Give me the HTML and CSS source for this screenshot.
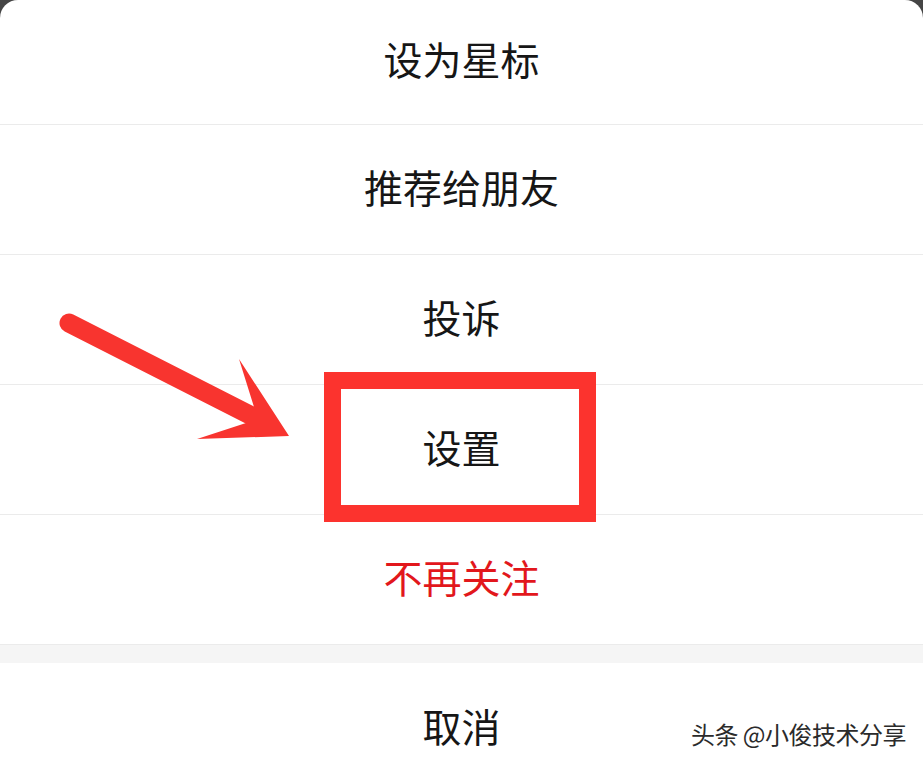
FILE: index.html
```html
<!DOCTYPE html>
<html lang="zh-CN">

<head>
    <meta charset="UTF-8">
    <meta name="viewport" content="width=device-width, initial-scale=1.0">
    <title>操作菜单</title>
    <link rel="stylesheet" href="styles.css">
</head>

<body>
    <div class="sheet">
        <!-- menu options -->
        <ul class="menu">
            <li class="menu-item menu-item-first">设为星标</li>
            <li class="menu-item">推荐给朋友</li>
            <li class="menu-item">投诉</li>
            <li class="menu-item">设置</li>
            <li class="menu-item menu-item-danger">不再关注</li>
        </ul>

        <div class="menu-gap"></div>

        <div class="menu-item menu-cancel">取消</div>

        <!-- annotation drawn on top of the screenshot -->
        <div class="mark-box"></div>
        <svg class="mark-arrow" width="923" height="771" viewBox="0 0 923 771">
            <line x1="69" y1="323" x2="252" y2="416" stroke="#f8342f" stroke-width="19" stroke-linecap="round" />
            <polygon points="239,359 289,436 197,439 246,423 254,407" fill="#f8342f" />
        </svg>

        <div class="watermark">头条 @小俊技术分享</div>
    </div>
</body>

</html>
```

FILE: styles.css
```css
html,
body {
    margin: 0;
    padding: 0;
    height: 771px;
    overflow: hidden;
}

body {
    background-color: #454545;
    font-family: 'Noto Sans CJK SC', 'Noto Sans', sans-serif;
}

.sheet {
    position: relative;
    background-color: #ffffff;
    border-radius: 18px 18px 0 0;
    height: 771px;
    overflow: hidden;
}

.menu {
    list-style: none;
    margin: 0;
    padding: 0;
}

.menu-item {
    display: flex;
    align-items: center;
    justify-content: center;
    height: 130px;
    padding-bottom: 6px;
    box-sizing: border-box;
    border-bottom: 1px solid #ebebeb;
    font-size: 39px;
    line-height: 1;
    color: #161616;
}

.menu-item-first {
    height: 125px;
    padding-bottom: 8px;
}

.menu-item-danger {
    color: #e2171c;
}

.menu-gap {
    height: 18px;
    background-color: #f5f5f5;
}

.menu-cancel {
    border-bottom: none;
}

.mark-box {
    position: absolute;
    left: 324px;
    top: 372px;
    width: 272px;
    height: 150px;
    box-sizing: border-box;
    border: 17px solid #fc332e;
}

.mark-arrow {
    position: absolute;
    left: 0;
    top: 0;
}

.watermark {
    position: absolute;
    right: 17px;
    bottom: 25px;
    font-size: 24px;
    line-height: 1;
    color: #2b2b2b;
    text-shadow: 1px 1px 1px rgba(255, 255, 255, 0.9);
    letter-spacing: -0.5px;
}
```
